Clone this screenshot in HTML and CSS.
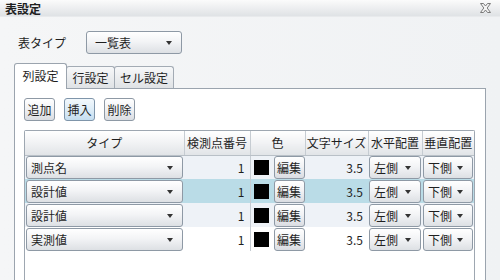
FILE: index.html
```html
<!DOCTYPE html>
<html lang="ja">

<head>
  <meta charset="UTF-8">
  <title>表設定</title>
  <link rel="stylesheet" href="styles.css">
</head>

<body>
  <div class="window">
    <div class="titlebar">
      <span>表設定</span>
      <svg class="close" width="11" height="10" viewBox="0 0 11 10">
        <path d="M0.5 0.5h3l2 2.5 2-2.5h3l-3.3 4.5 3.3 4.5h-3l-2-2.5-2 2.5h-3l3.3-4.5z" fill="#f4f4f4" stroke="#7a7a7a" stroke-width="1" />
      </svg>
    </div>

    <div class="content">
      <div class="type-row">
        <span class="type-label">表タイプ</span>
        <div class="select">一覧表<span class="arrow"></span></div>
      </div>

      <div class="tabs">
        <div class="tab active">列設定</div>
        <div class="tab">行設定</div>
        <div class="tab wide">セル設定</div>
      </div>

      <div class="panel">
        <div class="toolbar">
          <button class="btn">追加</button>
          <button class="btn btn-hot">挿入</button>
          <button class="btn">削除</button>
        </div>

        <div class="grid">
          <table>
            <colgroup>
              <col style="width: 159px">
              <col style="width: 66px">
              <col style="width: 55px">
              <col style="width: 63px">
              <col style="width: 54px">
              <col style="width: 52px">
            </colgroup>
            <thead>
              <tr>
                <th>タイプ</th>
                <th>検測点番号</th>
                <th>色</th>
                <th>文字サイズ</th>
                <th>水平配置</th>
                <th class="last">垂直配置</th>
              </tr>
            </thead>
            <tbody>
              <tr class="alt">
                <td class="pick"><div class="combo">測点名<span class="arrow"></span></div></td>
                <td class="num sep">1</td>
                <td><div class="color-cell"><span class="swatch"></span><button class="btn btn-edit">編集</button></div></td>
                <td class="num">3.5</td>
                <td class="pick"><div class="combo">左側<span class="arrow"></span></div></td>
                <td class="pick"><div class="combo">下側<span class="arrow"></span></div></td>
              </tr>
              <tr class="selected">
                <td class="pick"><div class="combo">設計値<span class="arrow"></span></div></td>
                <td class="num sep">1</td>
                <td><div class="color-cell"><span class="swatch"></span><button class="btn btn-edit">編集</button></div></td>
                <td class="num">3.5</td>
                <td class="pick"><div class="combo">左側<span class="arrow"></span></div></td>
                <td class="pick"><div class="combo">下側<span class="arrow"></span></div></td>
              </tr>
              <tr class="alt">
                <td class="pick"><div class="combo">設計値<span class="arrow"></span></div></td>
                <td class="num sep">1</td>
                <td><div class="color-cell"><span class="swatch"></span><button class="btn btn-edit">編集</button></div></td>
                <td class="num">3.5</td>
                <td class="pick"><div class="combo">左側<span class="arrow"></span></div></td>
                <td class="pick"><div class="combo">下側<span class="arrow"></span></div></td>
              </tr>
              <tr>
                <td class="pick"><div class="combo">実測値<span class="arrow"></span></div></td>
                <td class="num sep">1</td>
                <td><div class="color-cell"><span class="swatch"></span><button class="btn btn-edit">編集</button></div></td>
                <td class="num">3.5</td>
                <td class="pick"><div class="combo">左側<span class="arrow"></span></div></td>
                <td class="pick"><div class="combo">下側<span class="arrow"></span></div></td>
              </tr>
            </tbody>
          </table>
        </div>
      </div>
    </div>
  </div>
</body>

</html>
```

FILE: styles.css
```css
* {
  box-sizing: border-box;
}

body {
  margin: 0;
  font-family: "Noto Sans CJK JP", "Noto Sans", sans-serif;
  font-size: 12px;
  color: #1f1f1f;
}

.window {
  width: 500px;
  height: 280px;
  overflow: hidden;
  background: linear-gradient(90deg, #f5f6f7, #f0f2f4);
}

.titlebar {
  height: 17px;
  display: flex;
  align-items: center;
  justify-content: space-between;
  padding: 0 9px 0 5px;
  background: linear-gradient(#fbfbfb, #dfe2e5);
  border-bottom: 1px solid #e8eaec;
  font-weight: bold;
  line-height: 17px;
}

.close {
  display: block;
}

.content {
  padding: 14px 14px 0 14px;
}

.type-row {
  display: flex;
  align-items: center;
  height: 23px;
}

.type-label {
  width: 72px;
  padding-left: 4px;
}

.select,
.combo {
  position: relative;
  height: 23px;
  line-height: 21px;
  border: 1px solid #8e99a5;
  border-radius: 3px;
  background: linear-gradient(#ffffff, #f3f4f6 45%, #dde0e4);
  padding-left: 8px;
}

.select {
  width: 96px;
}

.arrow {
  position: absolute;
  right: 9px;
  top: 9px;
  width: 0;
  height: 0;
  border-left: 3.5px solid transparent;
  border-right: 3.5px solid transparent;
  border-top: 4px solid #333;
}

.tabs {
  margin-top: 9px;
  display: flex;
  align-items: flex-end;
  height: 26px;
  position: relative;
  z-index: 1;
}

.tab {
  height: 22px;
  width: 49px;
  line-height: 21px;
  text-align: center;
  border: 1px solid #a3abb4;
  border-bottom: none;
  border-radius: 3px 3px 0 0;
  background: linear-gradient(#f7f8f9, #dfe2e5);
  margin-left: -1px;
  margin-bottom: 1px;
}

.tab.wide {
  width: 60px;
}

.tab.active {
  height: 26px;
  width: 53px;
  line-height: 24px;
  background: #fff;
  margin-left: 0;
  margin-bottom: 0;
  border-color: #9ba4ae;
  z-index: 2;
}

.panel {
  margin-top: -1px;
  border: 1px solid #9ba4ae;
  background: #fff;
  height: 240px;
  width: 472px;
  padding: 9px 9px 0 9px;
}

.toolbar {
  display: flex;
  gap: 9px;
}

.btn {
  font-family: inherit;
  font-size: 12px;
  color: #1f1f1f;
  height: 23px;
  width: 31px;
  padding: 0;
  border: 1px solid #8e99a5;
  border-radius: 3px;
  background: linear-gradient(#ffffff, #f2f3f5 45%, #dadde2);
}

.btn-hot {
  border-color: #7f95aa;
  background: linear-gradient(#f2f8fc, #e0eef8 45%, #c5def0);
}

.grid {
  margin-top: 9px;
  width: 451px;
  height: 220px;
  border: 1px solid #9ea7b1;
  border-bottom: none;
  border-radius: 2px 2px 0 0;
}

table {
  border-collapse: collapse;
  table-layout: fixed;
  width: 449px;
}

th {
  height: 24px;
  font-weight: normal;
  text-align: center;
  background: linear-gradient(#ffffff, #f1f2f4 50%, #e1e4e7);
  border-right: 1px solid #c6ccd2;
  border-bottom: 1px solid #b9c0c7;
  padding: 0;
}

th.last {
  border-right: none;
}

td {
  height: 24px;
  padding: 0;
}

tr.alt td {
  background: #eef2f7;
}

tr.selected td {
  background: #badce7;
}

td.pick {
  padding: 0 1px;
}

td.pick .combo {
  height: 23px;
  padding-left: 4px;
}

td.num {
  text-align: right;
  padding-right: 5px;
}

td.sep {
  border-right: 1px solid #c6ccd2;
}

.color-cell {
  display: flex;
  align-items: center;
  padding-left: 3px;
}

.swatch {
  width: 15px;
  height: 15px;
  background: #000;
}

.btn-edit {
  margin-left: 5px;
  height: 23px;
}
```
